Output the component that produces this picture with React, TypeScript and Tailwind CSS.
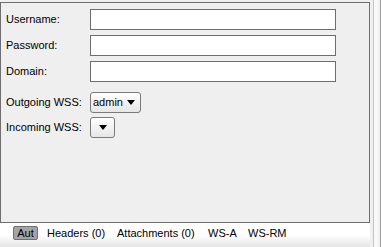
import React from "react";

function Arrow() {
  return (
    <svg width="8" height="5" viewBox="0 0 8 5" className="block">
      <path d="M0 0 H8 L4 5 Z" fill="#000" />
    </svg>
  );
}

function Field({ label }: { label: string }) {
  return (
    <div className="flex items-center h-[21px]">
      <div className="w-[84px] whitespace-nowrap">{label}</div>
      <div className="w-[246px] h-[21px] border border-[#6e6e6e] bg-white" />
    </div>
  );
}

export default function App() {
  return (
    <div className="w-[381px] h-[247px] bg-[#f0f0f0] flex text-[11px] text-black font-['Liberation_Sans',_Arial,_sans-serif] overflow-hidden">
      <div className="w-[370px] flex flex-col">
        <div className="mt-[2px] h-[221px] border border-[#6e6e6e] bg-[#efefef] pl-[5px] pt-[6px] flex flex-col">
          <div className="flex flex-col gap-[5px]">
            <Field label="Username:" />
            <Field label="Password:" />
            <Field label="Domain:" />
          </div>
          <div className="flex flex-col gap-[4px] mt-[10px]">
            <div className="flex items-center h-[21px]">
              <div className="w-[84px] whitespace-nowrap">Outgoing WSS:</div>
              <div className="w-[51px] h-[21px] border border-[#7a7a7a] rounded-[3px] bg-gradient-to-b from-white to-[#e6e6e6] flex items-center pl-[2px] pr-[5px] justify-between">
                <span>admin</span>
                <Arrow />
              </div>
            </div>
            <div className="flex items-center h-[21px]">
              <div className="w-[84px] whitespace-nowrap">Incoming WSS:</div>
              <div className="w-[25px] h-[21px] border border-[#7a7a7a] rounded-[3px] bg-gradient-to-b from-white to-[#e6e6e6] flex items-center justify-center">
                <Arrow />
              </div>
            </div>
          </div>
        </div>
        <div className="h-[24px] bg-gradient-to-b from-white via-white to-[#e4e4e4] flex items-start pt-[3px] pl-[13px] whitespace-nowrap">
          <div className="w-[25px] h-[14px] shrink-0 bg-[#a4a4a4] border border-[#707070] rounded-[2px] flex items-center justify-center leading-none">Aut</div>
          <div className="ml-[9px] w-[56px] shrink-0 h-[14px] flex items-center leading-none">Headers (0)</div>
          <div className="ml-[14px] w-[77px] shrink-0 h-[14px] flex items-center leading-none">Attachments (0)</div>
          <div className="ml-[14px] w-[26px] shrink-0 h-[14px] flex items-center leading-none">WS-A</div>
          <div className="ml-[14px] shrink-0 h-[14px] flex items-center leading-none">WS-RM</div>
        </div>
      </div>
      <div className="w-[11px] flex">
        <div className="w-[3px]" />
        <div className="w-[1px] bg-[#c4c4c4]" />
        <div className="w-[4px] bg-[#f8f8f8]" />
        <div className="w-[2px]" />
        <div className="w-[1px] bg-[#a0a0a0]" />
      </div>
    </div>
  );
}
